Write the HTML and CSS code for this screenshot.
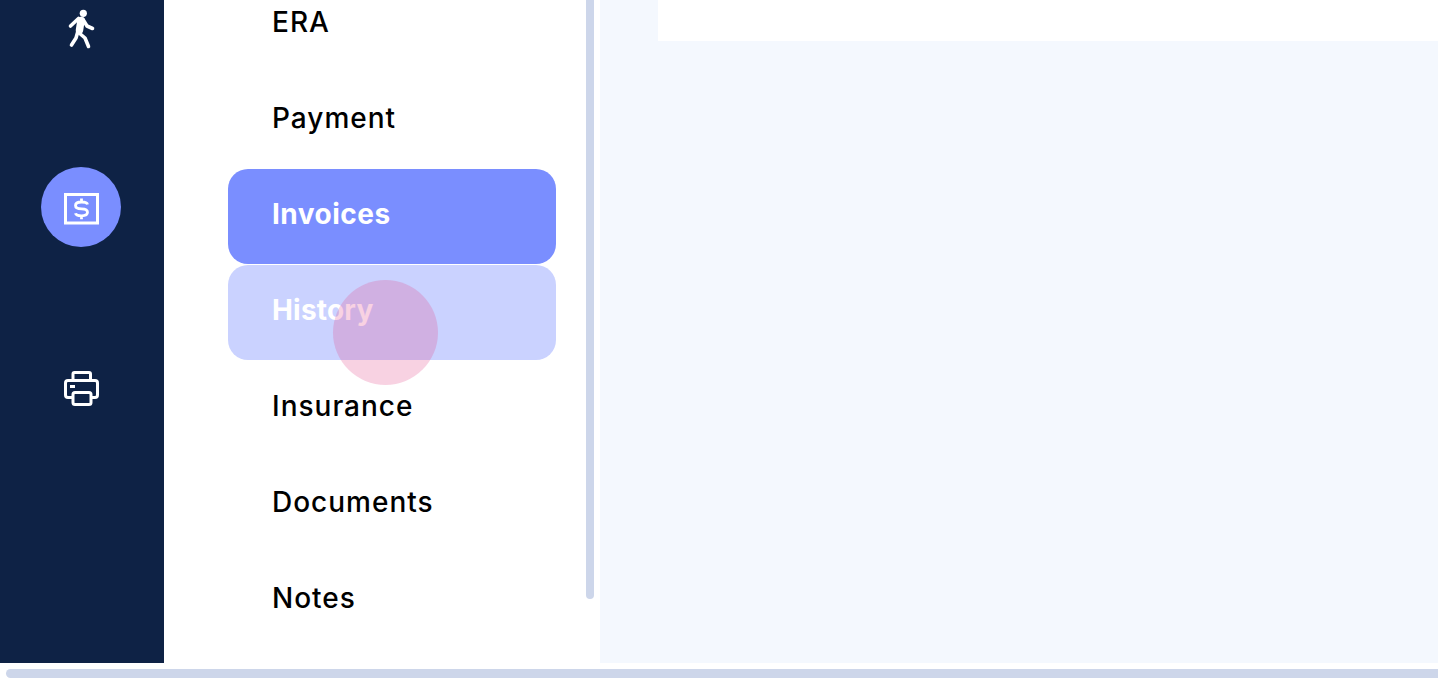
FILE: index.html
```html
<!DOCTYPE html>
<html lang="en">
<head>
  <meta charset="UTF-8" />
  <meta name="viewport" content="width=device-width, initial-scale=1" />
  <title>Invoices</title>
  <link rel="stylesheet" href="styles.css">
</head>
<body>

  <div class="app">
    <nav class="rail">
      <div class="rail-item walker">
        <svg class="rail-icon" viewBox="0 0 36 40" width="36" height="40">
          <circle cx="20.3" cy="4.3" r="3.6" fill="#fff" />
          <path d="M15.5 9.5 L7.5 17" class="limb" />
          <path d="M20 10.5 L24 17 L29.5 19.5" class="limb" />
          <path d="M18 11.5 L16.5 21" class="torso" />
          <path d="M15 22 L13 29 L8.5 36" class="limb" />
          <path d="M15 23 L22 29 L25.5 37.5" class="limb" />
        </svg>
      </div>
      <div class="rail-item active">
        <svg class="rail-icon" viewBox="0 0 35 32" width="35" height="32">
          <rect x="1.5" y="1.5" width="32" height="28.5" fill="none" stroke="#fff" stroke-width="3" />
          <path d="M23.5 11.5 Q23 9 17.5 9 Q11.5 9 11.5 12.5 Q11.5 15.8 17.5 15.8 Q23.5 15.8 23.5 19.3 Q23.5 22.8 17.5 22.8 Q12 22.8 11.5 20.3 M17.5 5.5 V9 M17.5 22.8 V26.3" fill="none" stroke="#fff" stroke-width="2.8" />
        </svg>
      </div>
      <div class="rail-item printer">
        <svg class="rail-icon" viewBox="0 0 35 35" width="35" height="35">
          <path d="M9 9 V3 Q9 1.5 10.5 1.5 H25 Q26.5 1.5 26.5 3 V9" class="line" />
          <path d="M8 26.5 H4 Q1.5 26.5 1.5 24 V12 Q1.5 9.5 4 9.5 H31 Q33.5 9.5 33.5 12 V24 Q33.5 26.5 31 26.5 H27" class="line" />
          <rect x="9" y="21.5" width="18" height="12" rx="2" class="line" />
          <path d="M6 15.5 H11" class="line" />
        </svg>
      </div>
    </nav>

    <aside class="side">
      <ul class="menu">
        <li class="menu-item">ERA</li>
        <li class="menu-item">Payment</li>
        <li class="menu-item selected">Invoices</li>
        <li class="menu-item hovered">History</li>
        <li class="menu-item">Insurance</li>
        <li class="menu-item">Documents</li>
        <li class="menu-item">Notes</li>
      </ul>
      <div class="side-thumb"></div>
    </aside>

    <main class="content">
      <div class="card"></div>
    </main>
  </div>

  <div class="h-scroll">
    <div class="h-thumb"></div>
  </div>

  <div class="touch-dot"></div>

</body>
</html>
```

FILE: styles.css
```css
body {
  margin: 0;
  height: 681px;
  overflow: hidden;
  background: #fff;
  font-family: 'Inter', 'Liberation Sans', sans-serif;
  position: relative;
}
.app {
  display: flex;
  height: 663.4px;
  overflow: hidden;
}
.rail {
  width: 164px;
  flex: none;
  box-sizing: border-box;
  padding-right: 2px;
  background: #0e2245;
  display: flex;
  flex-direction: column;
  align-items: center;
  gap: 100px;
  margin-top: -13px;
}
.rail-item {
  width: 80px;
  height: 80px;
  flex: none;
  border-radius: 50%;
  display: flex;
  align-items: center;
  justify-content: center;
}
.rail-item.active {
  background: #7a8eff;
}
.active .rail-icon {
  margin-top: 3px;
}
.walker .rail-icon {
  margin-top: 4px;
}
.printer .rail-icon {
  margin-top: 3px;
}
.limb {
  fill: none;
  stroke: #fff;
  stroke-width: 3.6;
  stroke-linejoin: round;
  stroke-linecap: round;
}
.torso {
  fill: none;
  stroke: #fff;
  stroke-width: 7.5;
  stroke-linecap: round;
}
.line {
  fill: none;
  stroke: #fff;
  stroke-width: 3;
}
.side {
  width: 436px;
  flex: none;
  background: #fff;
  display: flex;
  justify-content: space-between;
  padding-right: 6px;
  box-sizing: border-box;
}
.menu {
  list-style: none;
  margin: -23px 0 0 64px;
  padding: 0;
  width: 328px;
  display: flex;
  flex-direction: column;
  gap: 1px;
}
.menu-item {
  height: 95px;
  flex: none;
  box-sizing: border-box;
  padding: 27px 0 0 44px;
  border-radius: 20px;
  font-size: 28px;
  line-height: 36px;
  font-weight: 500;
  letter-spacing: 1px;
  color: #000;
}
.selected {
  background: #7a8eff;
  color: #fff;
  font-weight: 700;
  letter-spacing: 0.5px;
}
.hovered {
  background: #cad2ff;
  color: #fff;
  font-weight: 700;
  letter-spacing: 0.2px;
}
.side-thumb {
  width: 8px;
  height: 599px;
  background: #cdd6ea;
  border-radius: 0 0 4px 4px;
}
.content {
  flex: 1;
  background: #f4f8fe;
  padding-left: 58px;
}
.card {
  height: 40.5px;
  background: #fff;
}
.h-scroll {
  height: 17.6px;
  padding: 5.6px 0 0 6px;
  box-sizing: border-box;
}
.h-thumb {
  height: 9px;
  background: #cdd6ea;
  border-radius: 5px 0 0 5px;
}
.touch-dot {
  position: absolute;
  left: 333px;
  top: 280px;
  width: 105px;
  height: 105px;
  border-radius: 50%;
  background: rgba(226, 74, 140, 0.25);
}
```
